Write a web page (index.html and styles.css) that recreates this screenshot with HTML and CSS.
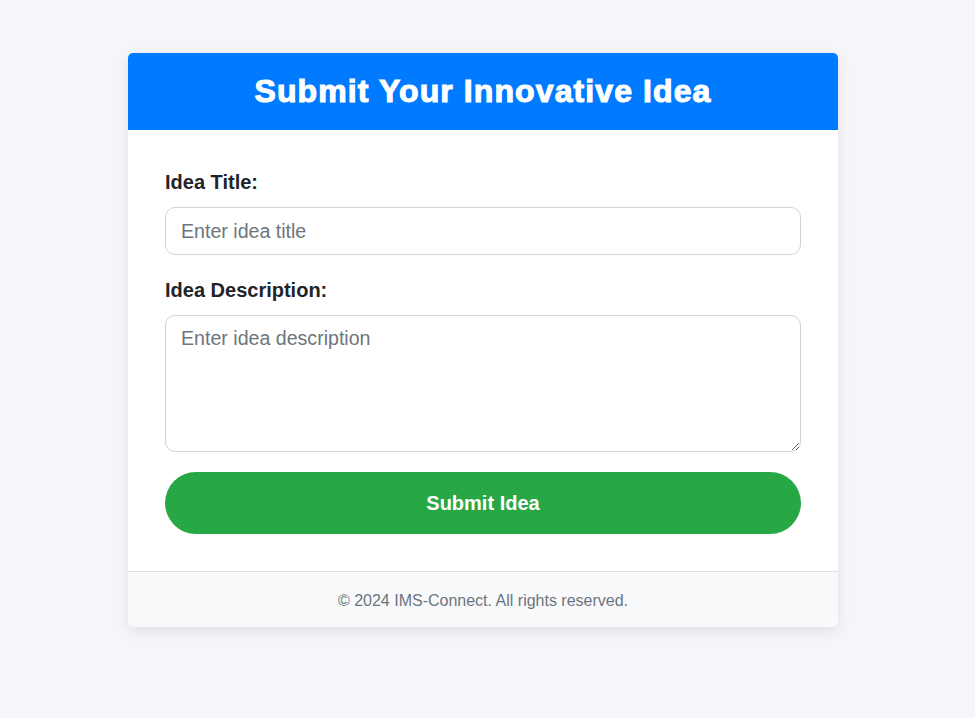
FILE: index.html
```html
<!DOCTYPE html>
<html lang="en">
<head>
<meta charset="utf-8">
<title>Submit Your Innovative Idea</title>
<link rel="stylesheet" href="styles.css">
</head>
<body>
<div class="page">
  <div class="card">
    <header class="card-header">
      <h1 class="title">Submit Your Innovative Idea</h1>
    </header>
    <form class="card-body">
      <label class="label" for="title">Idea Title:</label>
      <input class="field" id="title" type="text" placeholder="Enter idea title">
      <label class="label label-gap" for="desc">Idea Description:</label>
      <textarea class="field area" id="desc" placeholder="Enter idea description"></textarea>
      <button class="submit" type="button">Submit Idea</button>
    </form>
    <footer class="card-footer">© 2024 IMS-Connect. All rights reserved.</footer>
  </div>
</div>
</body>
</html>
```

FILE: styles.css
```css
* { box-sizing: border-box; }
html, body { margin: 0; padding: 0; }
body {
  background: #f4f6f9;
  font-family: "Liberation Sans", Arial, sans-serif;
  color: #212529;
  min-height: 718px;
}
.page {
  display: flex;
  justify-content: center;
  padding: 53px 9px 0 0;
}
.card {
  width: 710px;
  background: #fff;
  border-radius: 5px;
  overflow: hidden;
  box-shadow: 0 4px 14px rgba(0, 0, 0, 0.09);
}
.card-header {
  background: #007bff;
  padding: 20px 0;
  text-align: center;
}
.title {
  margin: 0;
  color: #fff;
  font-size: 32px;
  line-height: 37px;
  font-weight: bold;
  letter-spacing: 1.1px;
  -webkit-text-stroke: 1.1px #fff;
}
.card-body {
  display: flex;
  flex-direction: column;
  padding: 41px 37px 37px;
}
.label {
  font-size: 20px;
  line-height: 23px;
  font-weight: bold;
  color: #212529;
  margin-bottom: 13px;
}
.label-gap { margin-top: 24px; }
.field {
  width: 100%;
  height: 48px;
  border: 1px solid #ced4da;
  border-radius: 10px;
  padding: 12px 15px;
  font-family: "Liberation Sans", Arial, sans-serif;
  font-size: 19.6px;
  color: #495057;
  background: #fff;
  outline: none;
}
.field::placeholder { color: #6c757d; }
.area {
  height: 137px;
  resize: vertical;
  padding-top: 11px;
}
.submit {
  margin-top: 20px;
  height: 62px;
  border: none;
  border-radius: 31px;
  background: #28a745;
  color: #fff;
  font-family: "Liberation Sans", Arial, sans-serif;
  font-size: 20px;
  font-weight: bold;
  cursor: pointer;
}
.card-footer {
  background: #f8f9fa;
  border-top: 1px solid #dee2e6;
  height: 56px;
  padding-top: 3px;
  display: flex;
  align-items: center;
  justify-content: center;
  font-size: 16px;
  color: #6c757d;
}
```
